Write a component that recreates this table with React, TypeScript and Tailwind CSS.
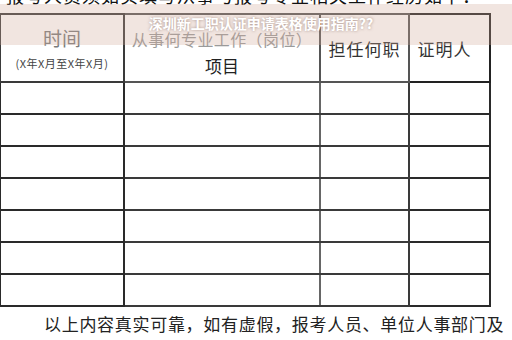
import React from "react";

const rows = [0, 1, 2, 3, 4, 5, 6];

export default function App() {
  const font = { fontFamily: '"Noto Sans CJK SC", "Noto Sans", sans-serif' };
  return (
    <div className="relative h-[340px] w-[512px] overflow-hidden bg-white text-[#222]" style={font}>
      {/* cut-off line above the table */}
      <div className="-mt-[16px] h-[29px] whitespace-nowrap pl-[6px] text-[18px] leading-[22px] tracking-[1px] text-[#111]">
        报考人员须如实填写从事与报考专业相关工作经历如下：
      </div>

      <table className="-ml-px w-[490px] table-fixed border-collapse">
        <colgroup>
          <col className="w-[124px]" />
          <col className="w-[196px]" />
          <col className="w-[89px]" />
          <col className="w-[81px]" />
        </colgroup>
        <thead>
          <tr className="h-[68px]">
            <th className="border-2 border-[#3a3a3a] p-0 align-top font-normal">
              <div className="mt-[11px] text-[19px] leading-[24px] text-[#7a7a7a]">时间</div>
              <div className="mt-[6px] whitespace-nowrap text-[11px] leading-[14px] tracking-[0.5px] text-[#444]">(X年X月至X年X月)</div>
            </th>
            <th className="border-2 border-[#555] p-0 align-top font-normal">
              <div className="mt-[12px] whitespace-nowrap text-[16px] leading-[24px] tracking-[0.4px] text-[#9a9a9a]">从事何专业工作（岗位）</div>
              <div className="mt-[4px] text-[17px] leading-[22px] text-[#222]">项目</div>
            </th>
            <th className="border-2 border-[#555] p-0 align-middle text-[17px] font-normal text-[#333]">
              <div className="mt-[2px] tracking-[1px]">担任何职</div>
            </th>
            <th className="border-2 border-[#222] p-0 align-middle text-[17px] font-normal text-[#333]">
              <div className="mt-[2px] pr-[10px] tracking-[1px]">证明人</div>
            </th>
          </tr>
        </thead>
        <tbody>
          {rows.map((r) => (
            <tr key={r} className="h-[32px]">
              <td className="border-2 border-[#2a2a2a]" />
              <td className="border-2 border-[#3a3a3a] border-r-[#666]" />
              <td className="border-2 border-[#3a3a3a]" />
              <td className="border-2 border-[#2a2a2a]" />
            </tr>
          ))}
        </tbody>
      </table>

      <div className="mt-[5px] whitespace-nowrap pl-[44px] text-[17px] leading-[24px] tracking-[0.7px] text-[#222]">
        以上内容真实可靠，如有虚假，报考人员、单位人事部门及
      </div>

      {/* translucent title banner */}
      <div className="absolute left-0 top-[4px] flex h-[41px] w-full items-start justify-center bg-[#d0a898]/30">
        <span className="mt-[10px] pl-[10px] text-[14px] font-bold leading-[18px] text-white [text-shadow:0_0_3px_rgba(120,90,80,0.6)]">
          深圳新工职认证申请表格使用指南??
        </span>
      </div>
    </div>
  );
}
